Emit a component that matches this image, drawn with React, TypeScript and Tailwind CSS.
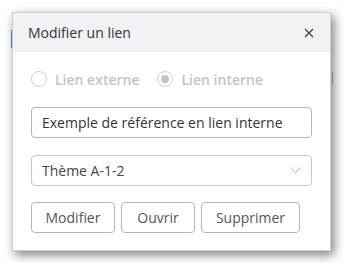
import React from "react";

export default function App() {
  return (
    <div className="relative w-[344px] h-[263px] bg-white overflow-hidden" style={{ fontFamily: '"Open Sans", sans-serif' }}>
      <div className="absolute left-[11px] top-[30px] w-[1px] h-[18px] bg-[#4a90d9]" />
      <div className="absolute left-[332px] top-[72px] w-[1px] h-[12px] bg-[#bbbbbb]" />
      <div className="absolute left-[12px] top-[12px] w-[319px] h-[239px] bg-white border border-[#d0d0d0] shadow-[3px_4px_10px_rgba(0,0,0,0.5)] flex flex-col">
        <div className="h-[39px] bg-[#f1f1f6] flex items-center justify-between pl-[15px] pr-[16px]">
          <span className="text-[14px] text-[#333333]">Modifier un lien</span>
          <svg width="10" height="10" viewBox="0 0 10 10" className="text-[#444]">
            <path d="M1 1 L9 9 M9 1 L1 9" stroke="currentColor" strokeWidth="1.4" />
          </svg>
        </div>
        <div className="flex flex-col px-[18px] pt-[16px]">
          <div className="flex items-center h-[22px] text-[14px] font-semibold text-[#c4c4c4]">
            <div className="flex items-center gap-[8px]">
              <span className="w-[16px] h-[16px] rounded-full border border-[#cfcfcf] bg-white" />
              <span>Lien externe</span>
            </div>
            <div className="flex items-center gap-[9px] ml-[17px]">
              <span className="w-[16px] h-[16px] rounded-full border border-[#cfcfcf] bg-white flex items-center justify-center">
                <span className="w-[8px] h-[8px] rounded-full bg-[#c4c4c4]" />
              </span>
              <span>Lien interne</span>
            </div>
          </div>
          <div className="mt-[17px] h-[31px] border border-[#b5b5b5] rounded-[4px] flex items-center px-[10px] text-[14px] text-[#333333]">
            Exemple de référence en lien interne
          </div>
          <div className="mt-[17px] h-[31px] border border-[#c8c8c8] rounded-[4px] flex items-center justify-between pl-[10px] pr-[10px] text-[14px] text-[#444444]">
            <span>Thème A-1-2</span>
            <svg width="11" height="7" viewBox="0 0 11 7">
              <path d="M0.5 0.5 L5.5 5.5 L10.5 0.5" stroke="#b8b8b8" strokeWidth="1" fill="none" />
            </svg>
          </div>
          <div className="mt-[16px] flex gap-[6px]">
            <button className="h-[31px] w-[84px] border border-[#b5b5b5] rounded-[4px] text-[14px] text-[#555555] bg-white">Modifier</button>
            <button className="h-[31px] w-[74px] border border-[#b5b5b5] rounded-[4px] text-[14px] text-[#555555] bg-white">Ouvrir</button>
            <button className="h-[31px] w-[99px] border border-[#b5b5b5] rounded-[4px] text-[14px] text-[#555555] bg-white">Supprimer</button>
          </div>
        </div>
      </div>
    </div>
  );
}
